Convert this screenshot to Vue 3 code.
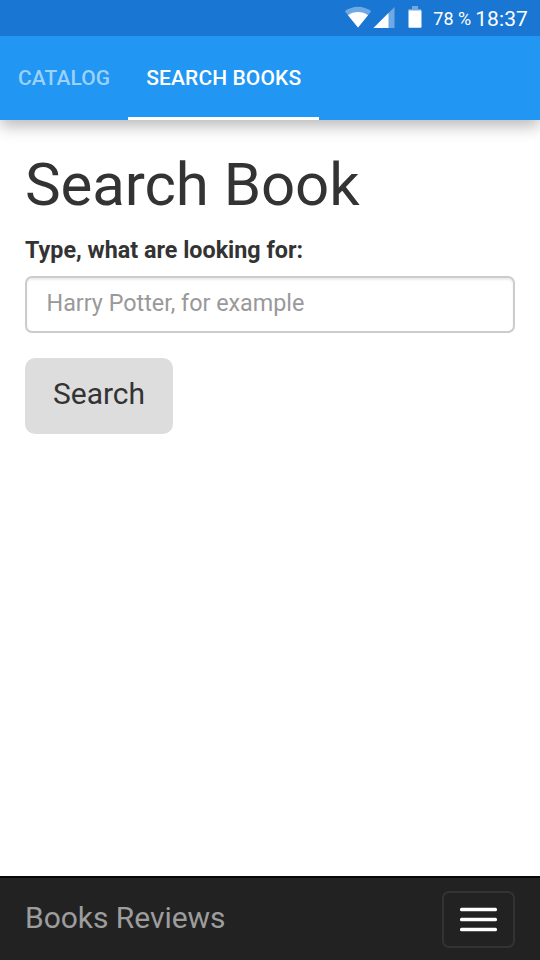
<script setup>
import { ref } from 'vue'

const tabs = ['CATALOG', 'SEARCH BOOKS']
const active = ref(1)
const query = ref('')
</script>

<template>
  <div class="screen">
    <div class="status">
      <svg class="wifi" width="28" height="22" viewBox="0 0 28 22">
        <path d="M0.8 5.2C8.5-.8 19.5-.8 27.2 5.2L14 21.5Z" fill="#6fa9e3" />
        <path d="M4 9.2C10 4.8 18 4.8 24 9.2L14 21.5Z" fill="#fff" />
      </svg>
      <svg class="signal" width="22" height="22" viewBox="0 0 22 22">
        <path d="M21.5 1V22H0.5Z" fill="#6fa9e3" />
        <path d="M15.5 7V22H0.5Z" fill="#fff" />
      </svg>
      <svg class="battery" width="14" height="22" viewBox="0 0 14 22">
        <path d="M4 0h6v3h3v2H0.5V3H4Z" fill="#6fa9e3" />
        <path d="M0.5 4.5h13V21a.7.7 0 0 1-.7.7H1.2a.7.7 0 0 1-.7-.7Z" fill="#fff" />
      </svg>
      <span class="percent">78 %</span>
      <span class="time">18:37</span>
    </div>
    <nav class="tabs">
      <button
        v-for="(tab, i) in tabs"
        :key="tab"
        class="tab"
        :class="{ active: active === i }"
        @click="active = i"
      >{{ tab }}</button>
    </nav>
    <main class="content">
      <h1 class="title">Search Book</h1>
      <label class="label" for="q">Type, what are looking for:</label>
      <input id="q" v-model="query" class="field" placeholder="Harry Potter, for example" />
      <button class="search">Search</button>
    </main>
    <footer class="bottom">
      <span class="brand">Books Reviews</span>
      <button class="toggle" aria-label="Menu">
        <svg width="37" height="25" viewBox="0 0 37 25" fill="#fff">
          <rect x="0" y="0.8" width="37" height="3.4" rx="1.5" />
          <rect x="0" y="10.8" width="37" height="3.4" rx="1.5" />
          <rect x="0" y="20.8" width="37" height="3.4" rx="1.5" />
        </svg>
      </button>
    </footer>
  </div>
</template>

<style>
body {
  margin: 0;
  background: #fff;
}
</style>

<style scoped>
.screen {
  width: 540px;
  height: 960px;
  display: flex;
  flex-direction: column;
  overflow: hidden;
  background: #fff;
  color: #333;
  font-family: Roboto, sans-serif;
}
.screen * {
  box-sizing: border-box;
}
button, input {
  font-family: inherit;
  margin: 0;
}
.status {
  position: relative;
  z-index: 1;
  flex: none;
  height: 36px;
  padding-right: 12px;
  display: flex;
  justify-content: flex-end;
  align-items: center;
  background: #1976d2;
  color: #fff;
}
.wifi {
  margin: 0 1px 2px 0;
}
.signal {
  margin: 0 13px 2px 0;
}
.battery {
  margin: 0 11.5px 3px 0;
}
.percent {
  margin: 2px 4px 0 0;
  font-size: 18px;
  line-height: 34px;
}
.time {
  margin-top: 2px;
  font-size: 21px;
  letter-spacing: 0.1px;
  line-height: 34px;
}
.tabs {
  flex: none;
  height: 84px;
  display: flex;
  background: #2196f3;
  box-shadow: 0 6px 15px rgba(0, 0, 0, 0.28);
}
.tab {
  height: 84px;
  padding: 2px 18px 0;
  border: 0;
  border-bottom: 3px solid transparent;
  background: none;
  color: #9bd2fa;
  font-size: 21px;
  font-weight: 500;
  letter-spacing: 0.1px;
  white-space: nowrap;
}
.tab.active {
  border-bottom-color: #fff;
  color: #fff;
}
.content {
  flex: 1;
  padding: 32px 25px 0;
  display: flex;
  flex-direction: column;
  align-items: flex-start;
}
.title {
  margin: 0;
  font-size: 60px;
  line-height: 66px;
  font-weight: 400;
  letter-spacing: -0.08px;
}
.label {
  margin-top: 15px;
  font-size: 23.33px;
  line-height: 34px;
  font-weight: 700;
}
.field {
  width: 490px;
  height: 57px;
  margin-top: 9px;
  padding: 0 19.5px 4px;
  border: 2px solid #ccc;
  border-radius: 7px;
  background: #fff;
  box-shadow: inset 0 2px 2px rgba(0, 0, 0, 0.075);
  color: #555;
  font-size: 23.33px;
  outline: 0;
}
.field::placeholder {
  color: #999;
  opacity: 1;
}
.search {
  width: 148px;
  height: 76px;
  margin-top: 25px;
  padding: 0 0 5px;
  border: 0;
  border-radius: 10px;
  background: #ddd;
  color: #333;
  font-size: 30px;
}
.bottom {
  flex: none;
  height: 84px;
  padding: 0 25px;
  display: flex;
  justify-content: space-between;
  align-items: center;
  border-top: 2px solid #080808;
  background: #222;
}
.brand {
  margin-bottom: 3px;
  color: #9d9d9d;
  font-size: 30px;
  letter-spacing: -0.04px;
}
.toggle {
  width: 73px;
  height: 57px;
  padding: 0;
  display: flex;
  align-items: center;
  justify-content: center;
  border: 2px solid #333;
  border-radius: 7px;
  background: none;
}
</style>
